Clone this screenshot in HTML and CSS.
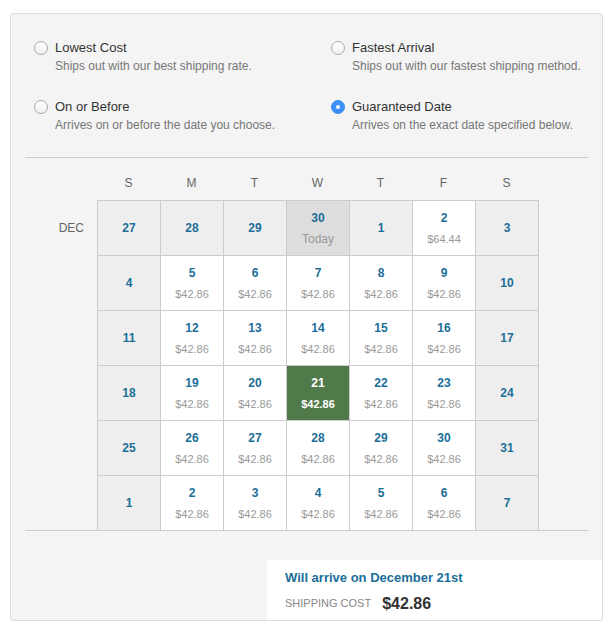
FILE: index.html
```html
<!DOCTYPE html>
<html>
<head>
<meta charset="utf-8">
<link rel="stylesheet" href="styles.css">
</head>
<body>
<div class="panel">
  <div class="options">
    <div class="option">
      <span class="radio"></span>
      <div class="opt-text"><div class="opt-title">Lowest Cost</div><div class="opt-sub">Ships out with our best shipping rate.</div></div>
    </div>
    <div class="option">
      <span class="radio"></span>
      <div class="opt-text"><div class="opt-title">Fastest Arrival</div><div class="opt-sub">Ships out with our fastest shipping method.</div></div>
    </div>
    <div class="option">
      <span class="radio"></span>
      <div class="opt-text"><div class="opt-title">On or Before</div><div class="opt-sub">Arrives on or before the date you choose.</div></div>
    </div>
    <div class="option">
      <span class="radio checked"></span>
      <div class="opt-text"><div class="opt-title">Guaranteed Date</div><div class="opt-sub">Arrives on the exact date specified below.</div></div>
    </div>
  </div>

  <div class="calendar">
    <div class="cal-head">
      <span></span><span>S</span><span>M</span><span>T</span><span>W</span><span>T</span><span>F</span><span>S</span>
    </div>
    <div class="cal-body">
      <div class="month"><span class="month-label">DEC</span></div>
      <div class="days">
        <div class="day off"><b>27</b></div>
        <div class="day off"><b>28</b></div>
        <div class="day off"><b>29</b></div>
        <div class="day today"><b>30</b><span class="sub">Today</span></div>
        <div class="day off"><b>1</b></div>
        <div class="day"><b>2</b><span class="price">$64.44</span></div>
        <div class="day off"><b>3</b></div>

        <div class="day off"><b>4</b></div>
        <div class="day"><b>5</b><span class="price">$42.86</span></div>
        <div class="day"><b>6</b><span class="price">$42.86</span></div>
        <div class="day"><b>7</b><span class="price">$42.86</span></div>
        <div class="day"><b>8</b><span class="price">$42.86</span></div>
        <div class="day"><b>9</b><span class="price">$42.86</span></div>
        <div class="day off"><b>10</b></div>

        <div class="day off"><b>11</b></div>
        <div class="day"><b>12</b><span class="price">$42.86</span></div>
        <div class="day"><b>13</b><span class="price">$42.86</span></div>
        <div class="day"><b>14</b><span class="price">$42.86</span></div>
        <div class="day"><b>15</b><span class="price">$42.86</span></div>
        <div class="day"><b>16</b><span class="price">$42.86</span></div>
        <div class="day off"><b>17</b></div>

        <div class="day off"><b>18</b></div>
        <div class="day"><b>19</b><span class="price">$42.86</span></div>
        <div class="day"><b>20</b><span class="price">$42.86</span></div>
        <div class="day selected"><b>21</b><span class="price">$42.86</span></div>
        <div class="day"><b>22</b><span class="price">$42.86</span></div>
        <div class="day"><b>23</b><span class="price">$42.86</span></div>
        <div class="day off"><b>24</b></div>

        <div class="day off"><b>25</b></div>
        <div class="day"><b>26</b><span class="price">$42.86</span></div>
        <div class="day"><b>27</b><span class="price">$42.86</span></div>
        <div class="day"><b>28</b><span class="price">$42.86</span></div>
        <div class="day"><b>29</b><span class="price">$42.86</span></div>
        <div class="day"><b>30</b><span class="price">$42.86</span></div>
        <div class="day off"><b>31</b></div>

        <div class="day off"><b>1</b></div>
        <div class="day"><b>2</b><span class="price">$42.86</span></div>
        <div class="day"><b>3</b><span class="price">$42.86</span></div>
        <div class="day"><b>4</b><span class="price">$42.86</span></div>
        <div class="day"><b>5</b><span class="price">$42.86</span></div>
        <div class="day"><b>6</b><span class="price">$42.86</span></div>
        <div class="day off"><b>7</b></div>
      </div>
    </div>
  </div>

  <div class="summary">
    <div class="arrive">Will arrive on December 21st</div>
    <div class="cost-row"><span class="cost-label">SHIPPING COST</span><span class="cost">$42.86</span></div>
  </div>
</div>
</body>
</html>
```

FILE: styles.css
```css
* { box-sizing: border-box; }
html, body { margin: 0; padding: 0; background: #fff; }
body { font-family: "Liberation Sans", Arial, Helvetica, sans-serif; color: #333; }

.panel {
  margin: 13px 0 0 10px;
  width: 593px;
  background: #f4f4f4;
  border: 1px solid #dddddd;
  border-radius: 3px;
  overflow: hidden;
}

.options {
  display: grid;
  grid-template-columns: 297px 1fr;
  row-gap: 21px;
  padding: 24px 0 22px 23px;
}
.option { display: flex; align-items: flex-start; }
.radio {
  flex: none;
  width: 14px;
  height: 14px;
  margin-top: 2.5px;
  margin-right: 7px;
  border-radius: 50%;
  border: 1px solid #a9a9a9;
  background: linear-gradient(#ffffff, #f0f0f0);
  position: relative;
}
.radio.checked {
  border-color: #3a8ff3;
  background: #3d90f5;
}
.radio.checked::after {
  content: "";
  position: absolute;
  left: 4px;
  top: 4px;
  width: 4px;
  height: 4px;
  border-radius: 50%;
  background: #fff;
}
.opt-title { font-size: 13px; line-height: 19px; color: #333; }
.opt-sub { font-size: 12px; line-height: 19px; color: #777; }

.calendar {
  margin: 0 14px;
  border-top: 1px solid #cccccc;
  border-bottom: 1px solid #cccccc;
}
.cal-head {
  display: grid;
  grid-template-columns: 72px repeat(7, 63px);
  padding: 16px 0 8px;
  font-size: 12px;
  line-height: 18px;
  color: #666;
  text-align: center;
}
.cal-body { display: flex; margin-bottom: -1px; }
.month {
  width: 72px;
  height: 55px;
  display: flex;
  align-items: center;
  justify-content: flex-end;
  padding-right: 13px;
}
.month-label { font-size: 12px; color: #666; }
.days {
  display: grid;
  grid-template-columns: repeat(7, 63px);
  grid-auto-rows: 55px;
  border-left: 1px solid #cccccc;
  border-top: 1px solid #cccccc;
}
.day {
  background: #fff;
  border-right: 1px solid #cccccc;
  border-bottom: 1px solid #cccccc;
  display: flex;
  flex-direction: column;
  align-items: center;
  justify-content: center;
  text-align: center;
}
.day b { font-size: 12px; line-height: 20px; font-weight: bold; color: #1b6e98; }
.day .price { font-size: 11px; line-height: 20px; margin-top: 1px; color: #999; }
.day .sub { font-size: 12px; line-height: 20px; margin-top: 1px; color: #999; }
.day.off { background: #eeeeee; }
.day.today { background: #dddddd; }
.day.selected { background: #517a4b; }
.day.selected b, .day.selected .price { color: #fff; font-weight: bold; }

.summary {
  margin: 29px 0 0 auto;
  width: 335px;
  height: 60px;
  background: #fff;
  border-radius: 4px 0 0 0;
  padding: 10px 0 0 18px;
}
.arrive { font-size: 13px; line-height: 16px; font-weight: bold; color: #1b6e98; }
.cost-row { display: flex; align-items: center; margin-top: 8px; height: 20px; }
.cost-label { font-size: 11px; color: #888; margin-right: 11px; margin-top: -3px; }
.cost { font-size: 16px; font-weight: bold; color: #333; }
```
